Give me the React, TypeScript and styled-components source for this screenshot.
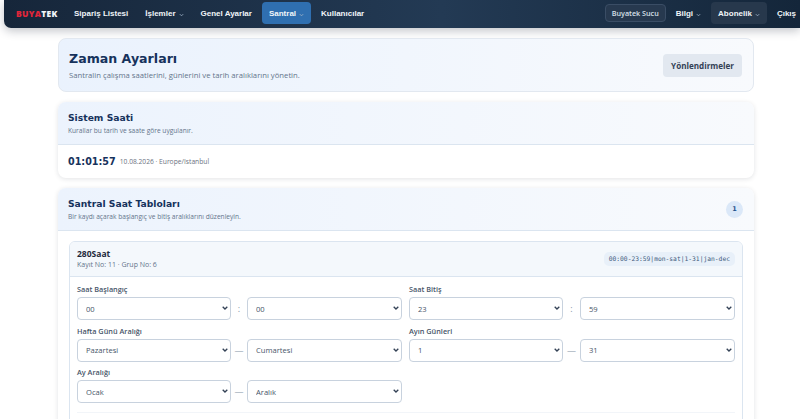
import styled, { createGlobalStyle } from 'styled-components';

const GlobalStyle = createGlobalStyle`
    html, body {
        margin: 0;
        padding: 0;
        height: 419px;
        overflow: hidden;
        background: #fff;
        font-family: "Open Sans", "Liberation Sans", sans-serif;
    }
`;

const menuLeft = [
    { text: 'Sipariş Listesi' },
    { text: 'İşlemler', caret: true },
    { text: 'Genel Ayarlar' },
    { text: 'Santral', caret: true, active: true },
    { text: 'Kullanıcılar' },
];

type FieldData = {
    label: string;
    from: string;
    to: string;
    sep: string;
};

const fields: FieldData[] = [
    { label: 'Saat Başlangıç', from: '00', to: '00', sep: ':' },
    { label: 'Saat Bitiş', from: '23', to: '59', sep: ':' },
    { label: 'Hafta Günü Aralığı', from: 'Pazartesi', to: 'Cumartesi', sep: '—' },
    { label: 'Ayın Günleri', from: '1', to: '31', sep: '—' },
    { label: 'Ay Aralığı', from: 'Ocak', to: 'Aralık', sep: '—' },
];

function Caret() {
    return (
        <CaretIcon viewBox="0 0 6 4">
            <path d="M1 1l2 2 2-2" fill="none" stroke="#9fb2c6" strokeWidth="1" />
        </CaretIcon>
    );
}

function SelectBox({ value }: { value: string }) {
    return (
        <SelectWrapper>
            <Select defaultValue={value}>
                <option>{value}</option>
            </Select>
            <Chevron viewBox="0 0 6 4">
                <path d="M0.7 0.7L3 3l2.3-2.3" fill="none" stroke="#334155" strokeWidth="1.3" />
            </Chevron>
        </SelectWrapper>
    );
}

function App() {
    return (
        <>
            <GlobalStyle />
            <Nav>
                <Brand>BUYA<span>TEK</span></Brand>
                <NavItems>
                    {menuLeft.map(item => (
                        <NavItem key={item.text} $active={item.active}>
                            {item.text}
                            {item.caret ? <Caret /> : null}
                        </NavItem>
                    ))}
                </NavItems>
                <NavRight>
                    <OutlineItem>Buyatek Sucu</OutlineItem>
                    <NavItem>Bilgi<Caret /></NavItem>
                    <DarkItem>Abonelik<Caret /></DarkItem>
                    <NavItem>Çıkış</NavItem>
                </NavRight>
            </Nav>
            <Page>
                <Hero>
                    <div>
                        <HeroTitle>Zaman Ayarları</HeroTitle>
                        <HeroText>Santralin çalışma saatlerini, günlerini ve tarih aralıklarını yönetin.</HeroText>
                    </div>
                    <HeroButton>Yönlendirmeler</HeroButton>
                </Hero>
                <Card>
                    <CardHeader>
                        <div>
                            <CardTitle>Sistem Saati</CardTitle>
                            <CardText>Kurallar bu tarih ve saate göre uygulanır.</CardText>
                        </div>
                    </CardHeader>
                    <ClockRow>
                        <Clock>01:01:57</Clock>
                        <ClockMeta>10.08.2026 · Europe/Istanbul</ClockMeta>
                    </ClockRow>
                </Card>
                <Card>
                    <CardHeader>
                        <div>
                            <CardTitle>Santral Saat Tabloları</CardTitle>
                            <CardText>Bir kaydı açarak başlangıç ve bitiş aralıklarını düzenleyin.</CardText>
                        </div>
                        <CountBadge>1</CountBadge>
                    </CardHeader>
                    <CardBody>
                        <Record>
                            <RecordHeader>
                                <div>
                                    <RecordTitle>280Saat</RecordTitle>
                                    <RecordMeta>Kayıt No: 11 · Grup No: 6</RecordMeta>
                                </div>
                                <RangeCode>00:00-23:59|mon-sat|1-31|jan-dec</RangeCode>
                            </RecordHeader>
                            <FieldGrid>
                                {fields.map(field => (
                                    <Field key={field.label}>
                                        <FieldLabel>{field.label}</FieldLabel>
                                        <FieldInputs>
                                            <SelectBox value={field.from} />
                                            <Separator>{field.sep}</Separator>
                                            <SelectBox value={field.to} />
                                        </FieldInputs>
                                    </Field>
                                ))}
                            </FieldGrid>
                            <Divider />
                        </Record>
                    </CardBody>
                </Card>
            </Page>
        </>
    );
}

export default App;

const Nav = styled.nav`
    display: flex;
    align-items: center;
    box-sizing: border-box;
    height: 28px;
    margin-left: 4px;
    padding: 0 0 2px 12px;
    border-radius: 0 0 0 7px;
    background: linear-gradient(90deg, #16263a, #233a54 55%, #14263a);
    box-shadow: 0 3px 10px rgba(15, 23, 42, 0.25);
    white-space: nowrap;
    overflow: hidden;
`;

const Brand = styled.div`
    width: 51px;
    font-size: 8.5px;
    font-weight: 800;
    letter-spacing: 0.3px;
    color: #e0263a;

    span {
        color: #f1f5f9;
    }
`;

const NavItems = styled.div`
    display: flex;
    align-items: center;
    gap: 3px;
`;

const NavItem = styled.div<{ $active?: boolean }>`
    display: flex;
    align-items: center;
    height: 22px;
    padding: 0 7px;
    border-radius: 4px;
    font-family: "Liberation Sans", sans-serif;
    font-size: 8px;
    font-weight: 700;
    color: #f1f5f9;
    background: ${props => (props.$active ? '#2f6fb0' : 'transparent')};
`;

const NavRight = styled.div`
    display: flex;
    align-items: center;
    gap: 3px;
    margin-left: auto;
    margin-right: -3px;
`;

const OutlineItem = styled.div`
    display: flex;
    align-items: center;
    box-sizing: border-box;
    height: 18px;
    padding: 0 6px;
    border: 1px solid #3a4d65;
    border-radius: 4px;
    background: #27394f;
    font-size: 7.2px;
    font-weight: 600;
    color: #d7e0ea;
`;

const DarkItem = styled(NavItem)`
    background: #27384c;
`;

const CaretIcon = styled.svg`
    width: 5px;
    height: 4px;
    margin: 4px 0 0 3px;
`;

const Page = styled.main`
    display: flex;
    flex-direction: column;
    gap: 10px;
    width: 696px;
    margin: 10px 0 0 58px;
`;

const Hero = styled.section`
    display: flex;
    justify-content: space-between;
    align-items: center;
    box-sizing: border-box;
    height: 54px;
    padding: 0 11px 0 10px;
    border: 1px solid #e2e8f0;
    border-radius: 8px;
    background: linear-gradient(90deg, #eaf2fd, #f8fafd);
`;

const HeroTitle = styled.h1`
    margin: 0;
    font-family: "DejaVu Sans", sans-serif;
    font-size: 12.6px;
    line-height: 17px;
    font-weight: 700;
    color: #16325c;
`;

const HeroText = styled.p`
    margin: 3px 0 0;
    font-size: 7.7px;
    line-height: 10px;
    color: #64748b;
`;

const HeroButton = styled.div`
    display: flex;
    align-items: center;
    height: 23px;
    padding: 0 8px;
    border-radius: 4px;
    background: #e2e8f0;
    font-size: 8.1px;
    font-weight: 700;
    color: #334155;
`;

const Card = styled.section`
    border-radius: 8px;
    background: #fff;
    box-shadow: 0 1px 5px rgba(15, 23, 42, 0.12);
    overflow: hidden;
`;

const CardHeader = styled.header`
    display: flex;
    justify-content: space-between;
    align-items: center;
    box-sizing: border-box;
    height: 43px;
    padding: 0 11px 0 10px;
    border-bottom: 1px solid #dbe5f0;
    background: linear-gradient(90deg, #ecf3fd, #f8fafd);
`;

const CardTitle = styled.h2`
    margin: 0;
    font-family: "DejaVu Sans", sans-serif;
    font-size: 9.2px;
    line-height: 13px;
    font-weight: 700;
    color: #16325c;
`;

const CardText = styled.p`
    margin: 2px 0 0;
    font-size: 6.6px;
    line-height: 9px;
    color: #64748b;
`;

const ClockRow = styled.div`
    display: flex;
    align-items: center;
    gap: 4px;
    height: 33px;
    padding: 0 10px;
`;

const Clock = styled.div`
    font-family: "DejaVu Sans", sans-serif;
    font-size: 9.6px;
    font-weight: 700;
    color: #16325c;
`;

const ClockMeta = styled.div`
    font-size: 6.7px;
    color: #6b7280;
`;

const CountBadge = styled.div`
    display: flex;
    align-items: center;
    justify-content: center;
    width: 17px;
    height: 17px;
    border-radius: 50%;
    background: #dbe8f8;
    font-family: "DejaVu Sans", sans-serif;
    font-size: 6.5px;
    font-weight: 700;
    color: #1e4f8a;
`;

const CardBody = styled.div`
    padding: 10px 11px;
`;

const Record = styled.article`
    border: 1px solid #dbe5f0;
    border-radius: 6px;
    overflow: hidden;
`;

const RecordHeader = styled.header`
    display: flex;
    justify-content: space-between;
    align-items: center;
    box-sizing: border-box;
    height: 35px;
    padding: 0 7px 1px;
    border-bottom: 1px solid #dbe5f0;
    background: #f4f8fc;
`;

const RecordTitle = styled.div`
    font-size: 8.5px;
    line-height: 11px;
    font-weight: 700;
    color: #1e293b;
`;

const RecordMeta = styled.div`
    margin-top: 1px;
    font-size: 7px;
    line-height: 9px;
    color: #64748b;
`;

const RangeCode = styled.div`
    padding: 3px 5px;
    border-radius: 5px;
    background: #e8f0f9;
    font-family: "DejaVu Sans Mono", monospace;
    font-size: 6.3px;
    line-height: 8px;
    color: #3d5a7c;
`;

const FieldGrid = styled.div`
    display: grid;
    grid-template-columns: 325px 326px;
    column-gap: 7px;
    row-gap: 6.5px;
    padding: 8px 7px 9px;
`;

const Field = styled.div`
    display: flex;
    flex-direction: column;
    gap: 3px;
`;

const FieldLabel = styled.label`
    font-size: 7.3px;
    line-height: 9px;
    font-weight: 600;
    color: #475569;
`;

const FieldInputs = styled.div`
    display: grid;
    grid-template-columns: 154px 1fr 155px;
    align-items: center;
`;

const SelectWrapper = styled.div`
    position: relative;
`;

const Select = styled.select`
    display: block;
    box-sizing: border-box;
    width: 100%;
    height: 23px;
    padding: 0 12px 0 8px;
    border: 1px solid #c8d2de;
    border-radius: 4px;
    background: #fff;
    appearance: none;
    font-family: "Open Sans", sans-serif;
    font-size: 7.6px;
    color: #475569;
`;

const Chevron = styled.svg`
    position: absolute;
    top: 9px;
    right: 3px;
    width: 6px;
    height: 4px;
    pointer-events: none;
`;

const Separator = styled.span`
    text-align: center;
    font-size: 9px;
    line-height: 9px;
    color: #8494a8;
`;

const Divider = styled.div`
    height: 1px;
    margin: 0 7px 60px;
    background: #f2f5f9;
`;
